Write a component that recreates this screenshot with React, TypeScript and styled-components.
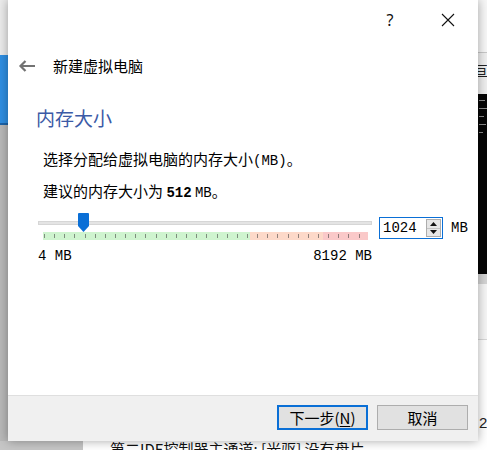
import React from 'react';
import styled, { createGlobalStyle } from 'styled-components';

const MIN_MB = 4;
const MAX_MB = 8192;
const VALUE_MB = 1024;
const SLIDER_WIDTH = 334;
const THUMB_WIDTH = 11;

const GlobalStyle = createGlobalStyle`
	html, body {
		margin: 0;
		padding: 0;
		background: #ffffff;
		overflow: hidden;
	}
	body {
		font-family: 'Noto Sans CJK SC', 'Noto Sans', sans-serif;
	}
`;

const App: React.FC = () => {
	const fraction = (VALUE_MB - MIN_MB) / (MAX_MB - MIN_MB);
	const thumbLeft = Math.round(fraction * (SLIDER_WIDTH - THUMB_WIDTH));

	return (
		<>
			<GlobalStyle />
			<Desktop>
				<LeftStrip />
				<Dialog>
					<TitleBar>
						<CaptionButton>?</CaptionButton>
						<CaptionButton>
							<svg width='14' height='14' viewBox='0 0 14 14'>
								<path d='M1 1 L13 13 M13 1 L1 13' stroke='#111' strokeWidth='1.1' />
							</svg>
						</CaptionButton>
					</TitleBar>
					<NavRow>
						<BackArrow>
							<svg width='18' height='12' viewBox='0 0 18 12'>
								<path
									d='M17 6 H2.5 M7.5 1 L2.5 6 L7.5 11'
									stroke='#737373'
									strokeWidth='2.2'
									fill='none'
								/>
							</svg>
						</BackArrow>
						<NavTitle>新建虚拟电脑</NavTitle>
					</NavRow>
					<Content>
						<Heading>内存大小</Heading>
						<Body>
							<Line>
								选择分配给虚拟电脑的内存大小<Mono>(MB)</Mono>。
							</Line>
							<Line>
								建议的内存大小为 <Mono $bold>512</Mono> <Mono>MB</Mono>。
							</Line>
						</Body>
						<SliderRow>
							<SliderBlock>
								<TrackArea>
									<Track />
									<Thumb style={{ left: thumbLeft }}>
										<svg width='11' height='19' viewBox='0 0 11 19'>
											<path d='M0 1 Q0 0 1 0 H10 Q11 0 11 1 V13 L5.5 19 L0 13 Z' fill='#0a6fd6' />
										</svg>
									</Thumb>
								</TrackArea>
								<TickBar />
								<ScaleLabels>
									<Mono>4 MB</Mono>
									<Mono>8192 MB</Mono>
								</ScaleLabels>
							</SliderBlock>
							<SpinBox>
								<SpinValue>1024</SpinValue>
								<SpinButtons>
									<SpinHalf>
										<svg width='7' height='4' viewBox='0 0 7 4'>
											<path d='M0 4 L3.5 0 L7 4 Z' fill='#111' />
										</svg>
									</SpinHalf>
									<SpinHalf>
										<svg width='7' height='4' viewBox='0 0 7 4'>
											<path d='M0 0 L3.5 4 L7 0 Z' fill='#111' />
										</svg>
									</SpinHalf>
								</SpinButtons>
							</SpinBox>
							<UnitLabel>MB</UnitLabel>
						</SliderRow>
					</Content>
					<Footer>
						<DialogButton $primary>
							下一步(<u>N</u>)
						</DialogButton>
						<DialogButton>取消</DialogButton>
					</Footer>
				</Dialog>
				<RightStrip>
					<RightText>亘</RightText>
					<RightDark>
						<TinyLine $w={6} />
						<TinyLine $w={8} />
						<TinyLine $w={5} />
						<TinyLine $w={7} />
						<TinyLine $w={4} />
					</RightDark>
					<RightLower>
						<RightDigit>2</RightDigit>
					</RightLower>
				</RightStrip>
				<BottomStrip>
					<BottomGray />
					<BottomText>第二IDE控制器主通道: [光驱] 没有盘片</BottomText>
				</BottomStrip>
			</Desktop>
		</>
	);
};

const Desktop = styled.div`
	width: 487px;
	height: 450px;
	display: grid;
	grid-template-columns: 8px 470px 9px;
	grid-template-rows: 441px 9px;
	overflow: hidden;
	background: #ffffff;
`;

const LeftStrip = styled.div`
	background: linear-gradient(
		to bottom,
		#ececec 0 55px,
		#2f8fe3 55px 123px,
		#1c64aa 123px 125px,
		#b9b9b9 125px
	);
`;

const Dialog = styled.div`
	position: relative;
	z-index: 1;
	display: flex;
	flex-direction: column;
	background: #ffffff;
	box-shadow: 0 0 10px rgba(0, 0, 0, 0.35);
`;

const TitleBar = styled.div`
	height: 40px;
	display: flex;
	justify-content: flex-end;
	padding-right: 1px;
`;

const CaptionButton = styled.div`
	width: 58px;
	display: flex;
	align-items: center;
	justify-content: center;
	font-family: 'Noto Sans', sans-serif;
	font-size: 16px;
	color: #111;
`;

const NavRow = styled.div`
	height: 54px;
	display: flex;
	align-items: center;
	padding-left: 10px;
	padding-bottom: 2px;
	box-sizing: border-box;
	gap: 17px;
`;

const BackArrow = styled.div`
	width: 18px;
	display: flex;
	align-items: center;
`;

const NavTitle = styled.div`
	font-size: 15px;
	color: #000;
	line-height: 20px;
`;

const Content = styled.div`
	flex: 1;
	padding: 12px 0 0 28px;
`;

const Heading = styled.div`
	font-size: 19px;
	line-height: 24px;
	color: #3b5aa6;
`;

const Body = styled.div`
	margin-top: 14px;
	padding-left: 7px;
`;

const Line = styled.div`
	font-size: 15px;
	line-height: 30px;
	color: #000;
	white-space: nowrap;
`;

const Mono = styled.span<{ $bold?: boolean }>`
	font-family: 'Liberation Mono', 'Noto Sans CJK SC', monospace;
	font-size: 14px;
	font-weight: ${(p) => (p.$bold ? 700 : 400)};
	white-space: pre;
`;

const SliderRow = styled.div`
	margin-top: 5px;
	display: flex;
	align-items: flex-start;
	padding-left: 2px;
`;

const SliderBlock = styled.div`
	width: ${SLIDER_WIDTH}px;
	display: flex;
	flex-direction: column;
`;

const TrackArea = styled.div`
	position: relative;
	height: 19px;
	display: flex;
	align-items: center;
`;

const Track = styled.div`
	width: 100%;
	height: 4px;
	background: #e4e4e4;
	border: 1px solid #d6d6d6;
	box-sizing: border-box;
`;

const Thumb = styled.div`
	position: absolute;
	top: 0;
	width: ${THUMB_WIDTH}px;
	height: 19px;
	display: flex;
`;

const TickBar = styled.div`
	margin-left: 5px;
	width: 325px;
	height: 8px;
	background:
		repeating-linear-gradient(
				90deg,
				transparent 0 1px,
				rgba(60, 60, 60, 0.55) 1px 2px,
				transparent 2px 10.15px
			)
			center / 100% 4px no-repeat,
		linear-gradient(
			90deg,
			#cff4cf 0 207px,
			#fdd9c9 207px 280px,
			#fac9c9 280px
		);
`;

const ScaleLabels = styled.div`
	margin-top: 8px;
	display: flex;
	justify-content: space-between;
	line-height: 16px;
	color: #000;
`;

const SpinBox = styled.div`
	margin: 4px 0 0 7px;
	width: 64px;
	height: 22px;
	box-sizing: border-box;
	border: 1px solid #0a6fd6;
	display: flex;
	align-items: center;
	justify-content: space-between;
	padding: 0 1px 0 3px;
	background: #fff;
`;

const SpinValue = styled.span`
	font-family: 'Liberation Mono', monospace;
	font-size: 14px;
	color: #000;
`;

const SpinButtons = styled.div`
	width: 15px;
	height: 18px;
	display: flex;
	flex-direction: column;
	border: 1px solid #adadad;
	box-sizing: border-box;
	background: #e6e6e6;
`;

const SpinHalf = styled.div`
	flex: 1;
	display: flex;
	align-items: center;
	justify-content: center;
	& + & {
		border-top: 1px solid #c4c4c4;
	}
`;

const UnitLabel = styled.span`
	margin: 7px 0 0 8px;
	font-family: 'Liberation Mono', monospace;
	font-size: 14px;
	color: #000;
`;

const Footer = styled.div`
	height: 46px;
	box-sizing: border-box;
	background: #f0f0f0;
	border-top: 1px solid #dfdfdf;
	display: flex;
	justify-content: flex-end;
	align-items: flex-start;
	gap: 9px;
	padding: 9px 10px 0 0;
`;

const DialogButton = styled.div<{ $primary?: boolean }>`
	width: 91px;
	height: 25px;
	box-sizing: border-box;
	display: flex;
	align-items: center;
	justify-content: center;
	background: #e1e1e1;
	border: ${(p) => (p.$primary ? '2px solid #0a6fd6' : '1px solid #adadad')};
	font-size: 15px;
	color: #000;

	u {
		text-underline-offset: 2px;
	}
`;

const RightStrip = styled.div`
	display: flex;
	flex-direction: column;
	background: linear-gradient(
		to bottom,
		#f7f7f7 0 52px,
		#c8c8c8 52px 53px,
		#efefef 53px 95px,
		#9a9a9a 95px 100px,
		#d4d4d4 100px 110px
	);
	padding-top: 62px;
	overflow: hidden;
`;

const RightText = styled.div`
	font-size: 14px;
	line-height: 16px;
	margin-left: -4px;
	color: #222;
	height: 32px;
`;

const RightDark = styled.div`
	height: 190px;
	background: #050505;
	display: flex;
	flex-direction: column;
	gap: 7px;
	padding: 6px 0 0 1px;
	box-sizing: border-box;
	border-bottom: 10px solid #d4d4d4;
`;

const TinyLine = styled.div<{ $w: number }>`
	width: ${(p) => p.$w}px;
	height: 1px;
	background: #8a8a8a;
`;

const RightLower = styled.div`
	flex: 1;
	background: linear-gradient(to bottom, #f6f6f6 0 55px, #d8d8d8 55px 56px, #ffffff 56px);
	display: flex;
	align-items: flex-end;
	padding-bottom: 10px;
`;

const RightDigit = styled.span`
	font-family: 'Liberation Sans', sans-serif;
	font-size: 15px;
	line-height: 16px;
	color: #222;
	margin-left: 1px;
`;

const BottomStrip = styled.div`
	grid-column: 1 / 4;
	display: flex;
	overflow: hidden;
	background: #ffffff;
`;

const BottomGray = styled.div`
	width: 83px;
	background: #c6c6c6;
`;

const BottomText = styled.div`
	margin-left: 27px;
	margin-top: -1px;
	font-size: 15px;
	line-height: 18px;
	color: #111;
	white-space: nowrap;
`;

export default App;
